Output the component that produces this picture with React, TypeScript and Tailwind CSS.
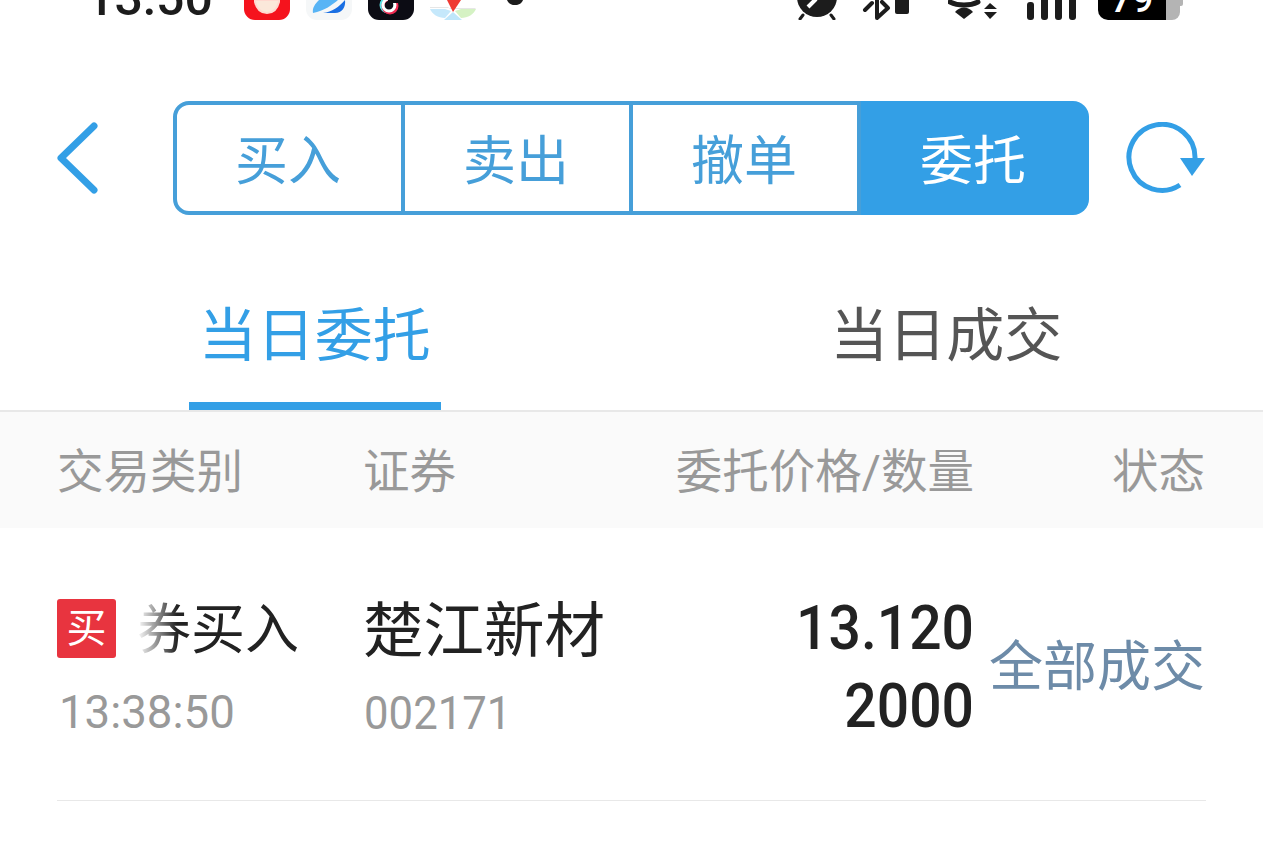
const segments = ["买入", "卖出", "撤单"];

function StatusBar() {
  return (
    <div className="h-5 overflow-hidden flex items-end pl-[86px] pr-[80px] text-[#1c1c1c]">
      {/* clock and app icons are cut off by the top edge */}
      <div className="w-[158px] shrink-0 text-[50px] leading-none font-medium mb-[-3px]">13:50</div>
      <svg width="46" height="20" viewBox="0 0 46 20" className="shrink-0">
        <path d="M0 0H46V9A11 11 0 0 1 35 20H11A11 11 0 0 1 0 9Z" fill="#f5131d" />
        <path d="M11 0V2C13 10 18 13 23 13 28 13 33 10 35 2V0Z" fill="#fbe8da" stroke="#ffd9d0" strokeWidth="2" />
      </svg>
      <svg width="46" height="20" viewBox="0 0 46 20" className="ml-4 shrink-0">
        <path d="M0 0H46V9A11 11 0 0 1 35 20H11A11 11 0 0 1 0 9Z" fill="#f5f7f8" />
        <path d="M13 0H32C26 5 18 11 7 13 6 8 9 4 13 0Z" fill="#58b4f5" />
        <path d="M17 13C26 12 33 7 39 0 40 7 36 13 29 13Z" fill="#1a6fe3" />
      </svg>
      <svg width="46" height="20" viewBox="0 0 46 20" className="ml-4 shrink-0">
        <path d="M0 0H46V9A11 11 0 0 1 35 20H11A11 11 0 0 1 0 9Z" fill="#0c0c14" />
        <circle cx="20" cy="5" r="7" fill="none" stroke="#5fe0e4" strokeWidth="3" />
        <circle cx="22" cy="6" r="7" fill="none" stroke="#ee2b52" strokeWidth="3" />
        <circle cx="21" cy="5" r="6" fill="none" stroke="#ffffff" strokeWidth="3" />
        <path d="M20 -1H30V3H24L20 3Z" fill="#0c0c14" />
      </svg>
      <svg width="46" height="20" viewBox="0 0 46 20" className="ml-4 shrink-0">
        <path d="M0 7H18L20 9H46L45 8H0Z" fill="#e6e6e6" />
        <path d="M0 9H15L21 11 15 18C8 18 2 14 0 9Z" fill="#c5e8fb" />
        <path d="M46 9H31L25 11 31 18C38 18 44 14 46 9Z" fill="#d5f2c4" />
        <path d="M14 20L23 12 32 20Z" fill="#bfe6fa" />
        <path d="M17 0H31L23 12Z" fill="#ef3a33" />
      </svg>
      <svg width="16" height="5" viewBox="0 0 16 5" className="ml-[31px] self-start shrink-0">
        <path d="M0 0H16C15 3 12 5 8 5 4 5 1 3 0 0Z" fill="#1c1c1c" />
      </svg>
      <div className="flex-1" />
      <svg width="42" height="20" viewBox="0 0 42 20" className="shrink-0">
        <circle cx="21" cy="-3" r="20" fill="#1c1c1c" />
        <path d="M7 15L4 19M35 15L38 19" stroke="#1c1c1c" strokeWidth="3" strokeLinecap="round" />
        <path d="M12 7L20 -1" stroke="#ffffff" strokeWidth="4" />
      </svg>
      <svg width="48" height="20" viewBox="0 0 48 20" className="ml-6 shrink-0">
        <path d="M3 10L10 3M15 0V18L26 8 20 2" fill="none" stroke="#1c1c1c" strokeWidth="4" strokeLinecap="round" strokeLinejoin="round" />
        <path d="M33 0H47V12A2 2 0 0 1 45 14H35A2 2 0 0 1 33 12Z" fill="#1c1c1c" />
      </svg>
      <svg width="50" height="20" viewBox="0 0 50 20" className="ml-[38px] shrink-0">
        <path d="M2 2C10 6 22 6 30 2" fill="none" stroke="#1c1c1c" strokeWidth="5" strokeLinecap="round" />
        <path d="M7 12C12 6 20 6 25 12L16 19Z" fill="#1c1c1c" />
        <path d="M36 9L42 3 49 9ZM36 12H49L42 19Z" fill="#1c1c1c" />
      </svg>
      <div className="ml-[29px] flex gap-[7px] items-end shrink-0">
        <div className="w-[7px] h-[18px] rounded-[3px] bg-[#1c1c1c]" />
        <div className="w-[7px] h-5 rounded-b-[3px] bg-[#1c1c1c]" />
        <div className="w-[7px] h-5 rounded-b-[3px] bg-[#1c1c1c]" />
        <div className="w-[7px] h-5 rounded-b-[3px] bg-[#1c1c1c]" />
      </div>
      <div className="ml-[22px] w-[85px] h-5 flex shrink-0">
        <div className="w-[68px] bg-black rounded-bl-[10px] text-white flex items-end justify-center overflow-hidden">
          <span className="text-[38px] leading-none font-medium mb-[2px]">79</span>
        </div>
        <div className="w-[14px] bg-[#b4b4b4] rounded-br-[8px]" />
        <div className="w-[3px] h-[6px] bg-[#b4b4b4] rounded-br-[2px]" />
      </div>
    </div>
  );
}

function Toolbar() {
  return (
    <div className="h-[114px] mt-[81px] flex items-center">
      <svg width="44" height="74" viewBox="0 0 44 74" className="ml-[55px] shrink-0">
        <path d="M39 5L6 37 39 69" fill="none" stroke="#339fe6" strokeWidth="7" strokeLinecap="round" strokeLinejoin="round" />
      </svg>
      <div className="ml-[74px] w-[916px] h-[114px] flex shrink-0 text-[53px] leading-none">
        {segments.map((s, i) => (
          <div
            key={s}
            className={
              i === 0
                ? "w-[232px] border-4 border-[#469fd9] rounded-l-[16px] pt-2 pr-[2px] flex items-center justify-center text-[#469fd9]"
                : "w-[228px] border-y-4 border-r-4 border-[#469fd9] pt-2 pr-[2px] flex items-center justify-center text-[#469fd9]"
            }
          >
            {s}
          </div>
        ))}
        <div className="flex-1 bg-[#339fe6] rounded-r-[16px] pt-2 pr-1 flex items-center justify-center text-white">委托</div>
      </div>
      <svg width="80" height="72" viewBox="0 0 80 72" className="ml-[36px] shrink-0">
        <path d="M55 63A33 33 0 1 1 70 36" fill="none" stroke="#339fe6" strokeWidth="5" />
        <path d="M55 36H80L67 54Z" fill="#339fe6" />
      </svg>
    </div>
  );
}

function Tabs() {
  return (
    <div className="mt-[58px] h-[139px] flex border-b-2 border-[#e8e8e8] text-[58px] leading-none">
      <div className="flex-1 flex justify-center pr-[2px]">
        <div className="w-[252px] h-[137px] border-b-8 border-[#339fe6] pt-[34px] text-center text-[#339fe6] whitespace-nowrap">当日委托</div>
      </div>
      <div className="flex-1 pt-[34px] pr-[2px] text-center text-[#555555]">当日成交</div>
    </div>
  );
}

export default function App() {
  return (
    <div className="w-[1263px] h-[848px] overflow-hidden bg-white font-['Roboto','Noto_Sans_CJK_SC',sans-serif]">
      <StatusBar />
      <Toolbar />
      <Tabs />
      <div className="h-[116px] bg-[#fafafa] pl-[57px] pr-[58px] pt-1 flex items-center text-[46.5px] leading-none text-[#999999]">
        <div className="w-[306px] shrink-0">交易类别</div>
        <div className="flex-1">证券</div>
        <div className="w-[300px] text-right whitespace-nowrap">委托价格/数量</div>
        <div className="w-[231px] text-right">状态</div>
      </div>
      <div className="h-[273px] mx-[57px] border-b border-[#e8e8e8] flex">
        <div className="w-[308px] shrink-0 pt-[71px]">
          <div className="flex h-[59px] items-center">
            <div className="w-[59px] h-[59px] rounded-[3px] bg-[#e8343f] text-white text-[40px] leading-none flex items-center justify-center shrink-0">买</div>
            <div className="relative ml-[21px] pt-1 text-[54px] leading-none text-[#222222]">
              券买入
              <div className="absolute inset-y-0 left-0 w-[40px] bg-gradient-to-r from-white to-transparent" />
            </div>
          </div>
          <div className="mt-[30px] pl-[2px] text-[47px] leading-none text-[#999999] origin-left scale-x-[0.97]">13:38:50</div>
        </div>
        <div className="flex-1 pt-[74px]">
          <div className="text-[60.5px] leading-[59px] text-[#222222] ml-[-2px] whitespace-nowrap">楚江新材</div>
          <div className="mt-[28px] ml-[-1px] text-[47px] leading-none text-[#999999] origin-left scale-x-[0.93]">002171</div>
        </div>
        <div className="w-[298px] pt-[61px] text-right text-[62px] leading-[78px] font-medium text-[#222222] origin-right scale-x-[0.92]">
          <div>13.120</div>
          <div>2000</div>
        </div>
        <div className="w-[232px] pt-[113px] pr-px text-right text-[54px] leading-none text-[#6d8ba8] whitespace-nowrap">全部成交</div>
      </div>
    </div>
  );
}
